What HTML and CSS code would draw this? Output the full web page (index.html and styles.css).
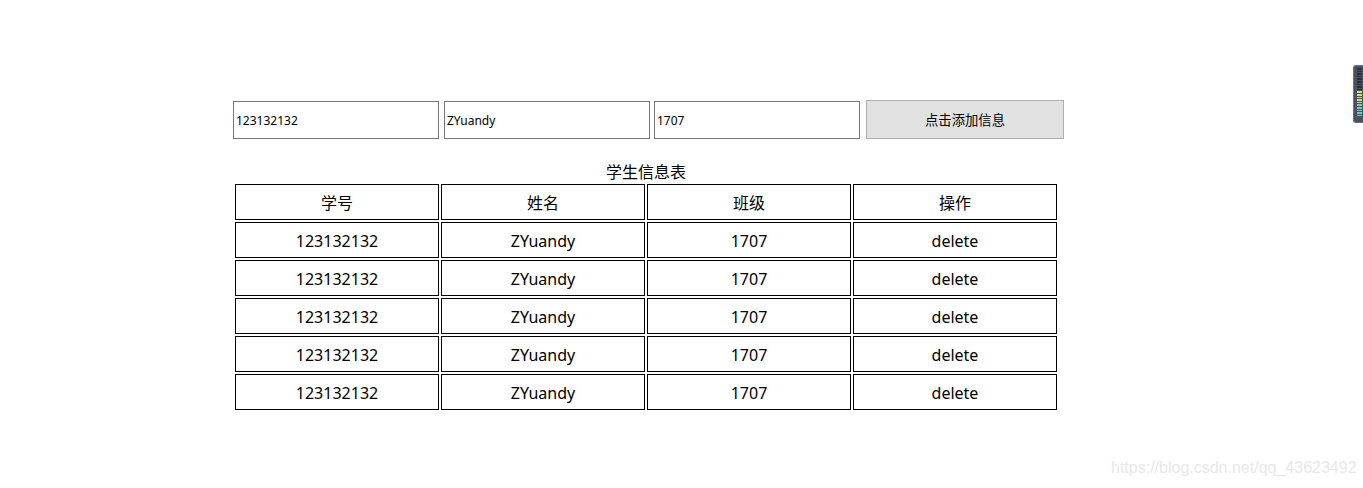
FILE: index.html
```html
<!DOCTYPE html>
<html lang="zh">
<head>
<meta charset="utf-8">
<title>学生信息表</title>
<link rel="stylesheet" href="styles.css">
</head>
<body>
<div class="page">
  <div class="form">
    <input class="field" type="text" value="123132132">
    <input class="field second" type="text" value="ZYuandy">
    <input class="field" type="text" value="1707">
    <button class="add">点击添加信息</button>
  </div>
  <table class="grid">
    <caption>学生信息表</caption>
    <tr><td>学号</td><td>姓名</td><td>班级</td><td>操作</td></tr>
    <tr><td>123132132</td><td>ZYuandy</td><td>1707</td><td>delete</td></tr>
    <tr><td>123132132</td><td>ZYuandy</td><td>1707</td><td>delete</td></tr>
    <tr><td>123132132</td><td>ZYuandy</td><td>1707</td><td>delete</td></tr>
    <tr><td>123132132</td><td>ZYuandy</td><td>1707</td><td>delete</td></tr>
    <tr><td>123132132</td><td>ZYuandy</td><td>1707</td><td>delete</td></tr>
  </table>
</div>
<div class="meter">
  <span class="bar dark"></span><span class="bar dark"></span><span class="bar dark"></span><span class="bar dark"></span><span class="bar dark"></span><span class="bar dark"></span><span class="bar dark"></span><span class="bar dark"></span><span class="bar dark"></span>
  <span class="bar yellow"></span><span class="bar yellow"></span><span class="bar yellow"></span><span class="bar yellow"></span><span class="bar yellow"></span>
  <span class="bar teal"></span><span class="bar teal"></span><span class="bar teal"></span><span class="bar teal"></span><span class="bar teal"></span>
</div>
<div class="watermark">https://blog.csdn.net/qq_43623492</div>
</body>
</html>
```
FILE: styles.css
```css
html, body {
  margin: 0;
  padding: 0;
  background: #ffffff;
}
body {
  width: 1363px;
  height: 488px;
  overflow: hidden;
  font-family: "Noto Sans", "Noto Sans CJK SC", sans-serif;
  color: #000;
}
.page {
  padding: 100px 0 0 233px;
}
.form {
  display: flex;
  align-items: center;
  gap: 4px;
  height: 39px;
}
.field {
  box-sizing: border-box;
  width: 206px;
  height: 38px;
  margin: 1px 0 0 0;
  padding: 0 2px;
  border: 1px solid #767676;
  font-family: "Noto Sans", "Noto Sans CJK SC", sans-serif;
  font-size: 12px;
  color: #000;
  background: #fff;
  outline: none;
}
.second {
  margin-left: 1px;
}
.add {
  box-sizing: border-box;
  width: 198px;
  height: 39px;
  margin-left: 2px;
  border: 1px solid #adadad;
  background: #e1e1e1;
  font-family: "Noto Sans CJK SC", sans-serif;
  font-size: 13.33px;
  color: #000;
  padding: 0;
}
.grid {
  margin-top: 22px;
  border-collapse: separate;
  border-spacing: 2px;
  width: 826px;
  font-size: 16px;
}
.grid caption {
  height: 21px;
  line-height: 21px;
  font-family: "Noto Sans CJK SC", sans-serif;
  font-size: 16px;
}
.grid td {
  width: 202px;
  height: 32px;
  padding: 2px 0 0 0;
  border: 1px solid #000;
  text-align: center;
  line-height: 32px;
}
.meter {
  position: absolute;
  left: 1353px;
  top: 65px;
  width: 10px;
  height: 58px;
  box-sizing: border-box;
  background: #4b5160;
  border: 1px solid #6a7080;
  border-right: none;
  border-radius: 3px 0 0 3px;
  display: flex;
  flex-direction: column;
  align-items: flex-end;
  padding: 2px 1px 0 0;
  gap: 1px;
}
.bar {
  display: block;
  width: 5px;
  height: 1.6px;
}
.dark { background: #2b2f3a; }
.yellow { background: #d8dc6a; }
.teal { background: #5fd3c0; }
.watermark {
  position: absolute;
  left: 1111px;
  top: 459px;
  font-family: "Liberation Sans", Arial, sans-serif;
  font-size: 16px;
  color: #e8e8e8;
}
```
